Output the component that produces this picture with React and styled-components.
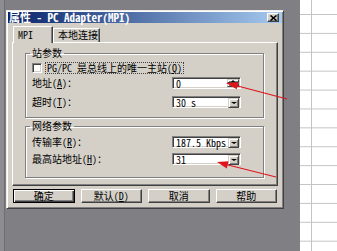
import React from 'react';
import styled, { createGlobalStyle } from 'styled-components';

const FACE = '#d4d0c8';
const FONT = `"Noto Sans Mono CJK SC", "Noto Sans CJK SC", sans-serif`;

const Global = createGlobalStyle`
  html, body {
    margin: 0;
    padding: 0;
    background: #807f84;
  }
  body {
    font-family: ${FONT};
    font-size: 10px;
    line-height: 10px;
    color: #000;
  }
`;

const Screen = styled.div`
  position: relative;
  display: flex;
  width: 337px;
  height: 251px;
  overflow: hidden;
`;

const EdgeStrip = styled.div`
  width: 4px;
  background: #8d8c90;
  border-right: 1px solid #6e6d72;
`;

const Desk = styled.div`
  width: 295px;
  box-sizing: border-box;
  padding: 10px 0 0 1px;
  background: #807f84;
`;

const Sheet = styled.div`
  flex: 1;
  background-color: #fff;
  background-image:
    linear-gradient(to right, transparent 11px, #c4c4c4 11px, #c4c4c4 12px, transparent 12px),
    linear-gradient(to bottom, #c4c4c4 1px, transparent 1px);
  background-size: 100% 100%, 100% 18.9px;
  background-position: 0 0, 0 14px;
  background-repeat: no-repeat, repeat;
`;

const Dialog = styled.div`
  width: 278px;
  box-sizing: border-box;
  padding: 1px;
  background: ${FACE};
  border: 1px solid;
  border-color: #eeece6 #404040 #404040 #eeece6;
  box-shadow: inset 1px 1px #fff, inset -1px -1px #808080;
`;

const TitleBar = styled.div`
  display: flex;
  align-items: center;
  justify-content: space-between;
  height: 11px;
  padding: 0 3px 0 1px;
  background: linear-gradient(to right, #0a246a, #a6caf0);
  color: #fff;
  font-weight: bold;
  font-size: 11px;
  line-height: 11px;
  white-space: pre;
`;

const CloseBtn = styled.div`
  display: flex;
  align-items: center;
  justify-content: center;
  width: 12px;
  height: 9px;
  box-sizing: border-box;
  background: ${FACE};
  border: 1px solid;
  border-color: #fff #404040 #404040 #fff;
  box-shadow: inset -1px -1px #808080;
`;

const Body = styled.div`
  padding: 3px 4px 4px 4px;
`;

const TabStrip = styled.div`
  position: relative;
  z-index: 1;
  display: flex;
  align-items: flex-end;
  height: 16px;
  padding-left: 1px;
`;

const Tab = styled.div`
  box-sizing: border-box;
  width: ${p => p.$w}px;
  height: ${p => (p.$active ? 17 : 14)}px;
  margin-bottom: ${p => (p.$active ? -1 : 0)}px;
  padding: ${p => (p.$active ? 3 : 1)}px 4px 0;
  background: ${FACE};
  border: 1px solid;
  border-bottom: none;
  border-color: #fff #404040 transparent #fff;
  box-shadow: inset -1px 0 #808080;
  white-space: pre;
`;

const Panel = styled.div`
  padding: 5px 13px 7px 12px;
  border: 1px solid;
  border-color: #fff #404040 #404040 #fff;
  box-shadow: inset -1px -1px #808080;
`;

const Group = styled.fieldset`
  margin: ${p => p.$mt || 0}px 0 0;
  padding: 0 6px ${p => p.$pb}px 6px;
  min-width: 0;
  border: 1px solid #808080;
  box-shadow: inset 1px 1px #fff, 1px 1px #fff;
`;

const Legend = styled.legend`
  margin-left: -2px;
  padding: 0 2px;
  line-height: 10px;
`;

const Row = styled.div`
  display: flex;
  align-items: center;
  height: 12px;
  margin-top: ${p => p.$mt}px;
  white-space: pre;
`;

const Label = styled.div`
  width: 140px;
`;

const Check = styled.div`
  width: 10px;
  height: 10px;
  box-sizing: border-box;
  background: #fff;
  border: 1px solid;
  border-color: #808080 #fff #fff #808080;
  box-shadow: inset 1px 1px #404040, inset -1px -1px ${FACE};
`;

const FocusText = styled.div`
  margin-left: 3px;
  padding: 0 1px;
  border: 1px dotted #444;
  line-height: 10px;
`;

const Field = styled.div`
  display: flex;
  width: 69px;
  height: 12px;
  box-sizing: border-box;
  background: #fff;
  border: 1px solid;
  border-color: #808080 #fff #fff #808080;
  box-shadow: inset 1px 1px #404040, inset -1px -1px ${FACE};
  padding: 1px 1px 1px 1px;
`;

const FieldText = styled.div`
  flex: 1;
  padding-left: 2px;
  line-height: 10px;
  font-size: 10px;
`;

const RaisedBtn = styled.div`
  display: flex;
  align-items: center;
  justify-content: center;
  width: ${p => p.$w}px;
  height: ${p => p.$h || 10}px;
  box-sizing: border-box;
  background: ${FACE};
  border: 1px solid;
  border-color: ${FACE} #404040 #404040 ${FACE};
  box-shadow: inset 1px 1px #fff, inset -1px -1px #808080;
`;

const Spin = styled.div`
  display: flex;
  flex-direction: column;
`;

const Tri = styled.div`
  width: 0;
  height: 0;
  border-left: ${p => p.$s}px solid transparent;
  border-right: ${p => p.$s}px solid transparent;
  ${p => (p.$up ? 'border-bottom' : 'border-top')}: ${p => p.$s - (p.$s > 2 ? 1 : 0)}px solid #000;
`;

const Buttons = styled.div`
  display: flex;
  gap: 6px;
  width: 264px;
  margin: 3px 0 0 1px;
`;

const Button = styled.div`
  flex: 1;
  display: flex;
  align-items: center;
  justify-content: center;
  height: 14px;
  box-sizing: border-box;
  background: ${FACE};
  border: 1px solid;
  border-color: ${p => (p.$default ? '#000' : '#fff #404040 #404040 #fff')};
  box-shadow: ${p =>
    p.$default
      ? 'inset 1px 1px #fff, inset -1px -1px #404040, inset -2px -2px #808080'
      : 'inset -1px -1px #808080'};
  white-space: pre;
`;

const U = styled.span`
  text-decoration: underline;
  text-underline-offset: 1px;
`;

const Overlay = styled.svg`
  position: absolute;
  left: 0;
  top: 0;
  pointer-events: none;
`;

function Combo({ value }) {
  return (
    <Field>
      <FieldText>{value}</FieldText>
      <RaisedBtn $w={11}>
        <Tri $s={3} />
      </RaisedBtn>
    </Field>
  );
}

function SpinBox({ value }) {
  return (
    <Field>
      <FieldText>{value}</FieldText>
      <Spin>
        <RaisedBtn $w={12} $h={5}>
          <Tri $s={2} $up />
        </RaisedBtn>
        <RaisedBtn $w={12} $h={5}>
          <Tri $s={2} />
        </RaisedBtn>
      </Spin>
    </Field>
  );
}

export default function App() {
  return (
    <Screen>
      <Global />
      <EdgeStrip />
      <Desk>
        <Dialog>
          <TitleBar>
            <span>属性 - PC Adapter(MPI)</span>
            <CloseBtn>
              <svg width="7" height="6" viewBox="0 0 7 6">
                <path d="M0.5 0.5 L6.5 5.5 M6.5 0.5 L0.5 5.5" stroke="#000" strokeWidth="1.6" />
              </svg>
            </CloseBtn>
          </TitleBar>
          <Body>
            <TabStrip>
              <Tab $active $w={40}>MPI</Tab>
              <Tab $w={47}>本地连接</Tab>
            </TabStrip>
            <Panel>
              <Group $pb={9}>
                <Legend>站参数</Legend>
                <Row $mt={4}>
                  <Check />
                  <FocusText>PG/PC 是总线上的唯一主站(<U>Q</U>)</FocusText>
                </Row>
                <Row $mt={3}>
                  <Label>地址(<U>A</U>)：</Label>
                  <SpinBox value="0" />
                </Row>
                <Row $mt={7}>
                  <Label>超时(<U>T</U>)：</Label>
                  <Combo value="30 s" />
                </Row>
              </Group>
              <Group $mt={3} $pb={12}>
                <Legend>网络参数</Legend>
                <Row $mt={5}>
                  <Label>传输率(<U>R</U>)：</Label>
                  <Combo value="187.5 Kbps" />
                </Row>
                <Row $mt={5}>
                  <Label>最高站地址(<U>H</U>)：</Label>
                  <Combo value="31" />
                </Row>
              </Group>
            </Panel>
            <Buttons>
              <Button $default>确定</Button>
              <Button>默认(<U>D</U>)</Button>
              <Button>取消</Button>
              <Button>帮助</Button>
            </Buttons>
          </Body>
        </Dialog>
      </Desk>
      <Sheet />
      <Overlay width="337" height="251" viewBox="0 0 337 251">
        <line x1="287" y1="99" x2="234" y2="85" stroke="#e0141c" strokeWidth="1.2" />
        <polygon points="226,83 238.5,82.3 236.7,89.3" fill="#e0141c" />
        <line x1="276" y1="177" x2="224" y2="164" stroke="#e0141c" strokeWidth="1.2" />
        <polygon points="217,162 228.5,161.2 226.8,168.4" fill="#e0141c" />
      </Overlay>
    </Screen>
  );
}
